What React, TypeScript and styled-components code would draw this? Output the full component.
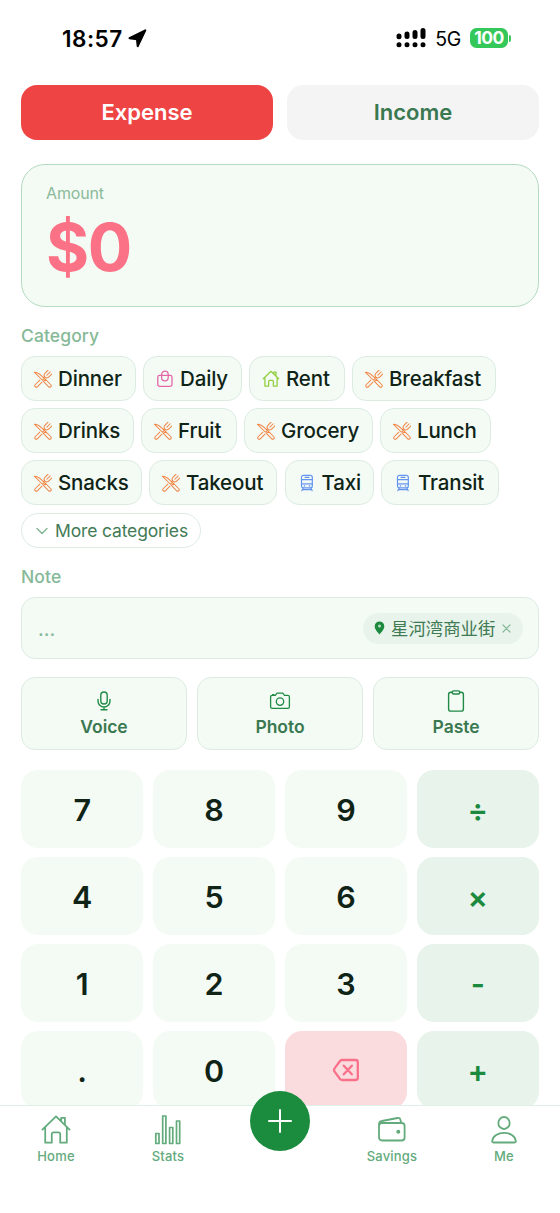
import React from 'react';
import styled, { createGlobalStyle } from 'styled-components';

const GlobalStyle = createGlobalStyle`
  * { box-sizing: border-box; }
  body { margin: 0; background: #fff; overflow: hidden; }
  button { border: 0; margin: 0; padding: 0; background: none; font: inherit; color: inherit; }
`;

const ui = 'Inter, "Noto Sans CJK SC", sans-serif';

const Screen = styled.div`
  width: 560px;
  height: 1213px;
  display: flex;
  flex-direction: column;
  background: #fff;
  font-family: ${ui};
  overflow: hidden;
`;

const StatusBar = styled.header`
  flex: none;
  height: 84px;
  padding: 0 49px 8px 62px;
  display: flex;
  align-items: center;
  color: #000;
`;

const Clock = styled.span`
  font-size: 22.5px;
  font-weight: 600;
  letter-spacing: 0.5px;
  margin-right: 5px;
`;

const StatusRight = styled.div`
  margin-left: auto;
  display: flex;
  align-items: center;
`;

const Network = styled.span`
  font-size: 19.5px;
  letter-spacing: -0.3px;
  margin: 1px 9px 0 9px;
`;

const Battery = styled.span`
  width: 38px;
  height: 20px;
  border-radius: 6.5px;
  background: #34c759;
  color: #fff;
  font-size: 17.5px;
  font-weight: 700;
  letter-spacing: -0.6px;
  line-height: 20px;
  text-align: center;
`;

const BatteryTip = styled.span`
  width: 2px;
  height: 7px;
  margin-left: 1px;
  border-radius: 0 3px 3px 0;
  background: #34c759;
`;

const Body = styled.main`
  flex: 1;
  min-height: 0;
  padding: 0 21px;
  overflow: hidden;
  display: flex;
  flex-direction: column;
`;

const Segments = styled.div`
  flex: none;
  display: grid;
  grid-template-columns: 1fr 1fr;
  gap: 14px;
  padding-top: 0.5px;
`;

const Segment = styled.button<{ $active?: boolean }>`
  height: 55.5px;
  border-radius: 16px;
  font-size: 22px;
  font-weight: 600;
  background: ${p => (p.$active ? '#ef4444' : '#f4f4f4')};
  color: ${p => (p.$active ? '#fff' : '#3a7850')};
`;

const AmountCard = styled.section`
  flex: none;
  height: 143px;
  margin-top: 23.6px;
  padding: 18px 24px;
  border: 1.5px solid #b5dbc1;
  border-radius: 24px;
  background: #f4fbf5;
`;

const AmountLabel = styled.div`
  font-size: 16px;
  line-height: 20px;
  letter-spacing: -0.15px;
  color: #8bba9a;
`;

const AmountValue = styled.div`
  margin-top: 8.5px;
  font-size: 66px;
  line-height: 72px;
  font-weight: 700;
  letter-spacing: -1.4px;
  color: #fb7185;
`;

const SectionLabel = styled.h2<{ $top: number; $bottom: number }>`
  flex: none;
  margin: ${p => p.$top}px 0 ${p => p.$bottom}px;
  font-size: 17.5px;
  line-height: 20px;
  font-weight: 500;
  letter-spacing: 0.1px;
  color: #86b997;
`;

const Chips = styled.div`
  flex: none;
  display: flex;
  flex-direction: column;
  gap: 7.5px;
`;

const ChipRow = styled.div`
  display: flex;
  gap: 7.5px;
`;

const Chip = styled.button<{ $w: number }>`
  width: ${p => p.$w}px;
  height: 44.5px;
  padding-left: 12px;
  border: 1px solid #dcece1;
  border-radius: 14px;
  background: #f4fbf5;
  display: flex;
  align-items: center;
  gap: 6px;
  font-size: 20.5px;
  font-weight: 500;
  letter-spacing: -0.15px;
  color: #0f2417;
  white-space: nowrap;
`;

const MoreChip = styled.button`
  width: 180px;
  height: 35px;
  margin-top: 1px;
  padding-left: 14px;
  border: 1px solid #dcece1;
  border-radius: 18px;
  display: flex;
  align-items: center;
  gap: 7px;
  font-size: 17.5px;
  letter-spacing: -0.15px;
  color: #437b56;
  white-space: nowrap;
`;

const NoteBox = styled.section`
  flex: none;
  height: 62px;
  padding: 0 15px 0 16px;
  border: 1px solid #dcece1;
  border-radius: 14px;
  background: #f4fbf5;
  display: flex;
  align-items: center;
  justify-content: space-between;
`;

const Placeholder = styled.span`
  font-size: 19px;
  font-weight: 500;
  margin-top: 2px;
  color: #8bba9a;
`;

const PlaceTag = styled.span`
  width: 160px;
  height: 31px;
  padding: 0 11px;
  border-radius: 16px;
  background: #e8f4eb;
  display: flex;
  align-items: center;
  font-family: "Noto Sans CJK SC", sans-serif;
  font-size: 17.4px;
  color: #3f7a53;
  white-space: nowrap;
`;

const PlaceName = styled.span`
  margin: 0 7px 1px 6px;
`;

const Actions = styled.div`
  flex: none;
  margin-top: 18px;
  display: grid;
  grid-template-columns: repeat(3, 1fr);
  gap: 10px;
`;

const Action = styled.button`
  height: 73px;
  padding-top: 12px;
  border: 1px solid #dcece1;
  border-radius: 14px;
  background: #f4fbf5;
  display: flex;
  flex-direction: column;
  align-items: center;
  gap: 4px;
  font-size: 17.5px;
  line-height: 22px;
  font-weight: 600;
  letter-spacing: -0.05px;
  color: #3a7850;
`;

const Keypad = styled.div`
  flex: none;
  margin-top: 20px;
  display: grid;
  grid-template-columns: repeat(4, 1fr);
  gap: 9px 9.5px;
`;

type KeyKind = 'digit' | 'operator' | 'delete';
const keyFill = { digit: '#f4fbf5', operator: '#e8f3eb', delete: '#fbdcde' };
const keyInk = { digit: '#0f2417', operator: '#1b8a3f', delete: '#f9708a' };

const Key = styled.button<{ $kind: KeyKind }>`
  height: 78px;
  border-radius: 17px;
  background: ${p => keyFill[p.$kind]};
  color: ${p => keyInk[p.$kind]};
  display: flex;
  align-items: center;
  justify-content: center;
  font-size: 30.5px;
  font-weight: 600;
`;

const TabBar = styled.nav`
  position: relative;
  flex: none;
  height: 108px;
  border-top: 1px solid #dff0e8;
  background: #fff;
  display: grid;
  grid-template-columns: repeat(5, 1fr);
`;

const Tab = styled.button`
  height: 62px;
  padding-top: 9px;
  display: flex;
  flex-direction: column;
  align-items: center;
  gap: 3px;
  font-size: 13px;
  line-height: 16px;
  font-weight: 500;
  letter-spacing: 0.2px;
  color: #63ab7c;
`;

const AddButton = styled.button`
  position: absolute;
  left: 250px;
  top: -15px;
  width: 60px;
  height: 60px;
  border-radius: 50%;
  background: #1b8c3e;
  display: flex;
  align-items: center;
  justify-content: center;
`;

type SvgProps = React.SVGProps<SVGSVGElement> & { w: number; h?: number; vb: string };
const Drawing = styled.svg`
  flex: none;
`;
const Svg = ({ w, h = w, vb, children, ...rest }: SvgProps) => (
  <Drawing width={w} height={h} viewBox={vb} fill="none" strokeLinecap="round" strokeLinejoin="round" {...rest}>
    {children}
  </Drawing>
);

const FoodIcon = () => (
  <Svg w={18} vb="0 0 36 36" stroke="#f08545" strokeWidth={2}>
    <g transform="rotate(-45 18 18)">
      <path d="M15.500-3.500C20.500 0 21 9 20.500 19H15.500Z" />
      <path d="M15 22V36.500Q15 40 18 40T21 36.500V22Z" />
    </g>
    <g transform="rotate(45 18 18)">
      <path d="M12.500-2.500V6Q12.500 12.500 18 12.500T23.500 6V-2.500M18-2.500V7M15 24V36.500Q15 40 18 40T21 36.500V24M16.500 12.500V15M19.500 12.500V15" />
    </g>
  </Svg>
);

const BagIcon = () => (
  <Svg w={18} vb="0 0 18 18" stroke="#e566a8" strokeWidth={1.3}>
    <rect x="1.800" y="5.400" width="14.200" height="11" rx="1.800" />
    <path d="M5.600 5.200V4.500A3.300 3.300 0 0 1 12.200 4.500V5.200M5.600 5.400V7.500A3.300 3.300 0 0 0 12.200 7.500V5.400" />
  </Svg>
);

const HouseShape = () => (
  <path d="M1.500 15.500 16 1.500 30.500 15.500M4.500 13V29.500H11.500V20.500Q11.500 18.500 13.500 18.500H18.500Q20.500 18.500 20.500 20.500V29.500H27.500V13M21.500 6.500V3H25.500V10.500" />
);

const TrainIcon = () => (
  <Svg w={18} vb="0 0 18 18" stroke="#6494ee" strokeWidth={1.2}>
    <rect x="3.500" y="1.300" width="10.800" height="12.600" rx="2" />
    <path d="M7 3.400H11M3.700 5.700H14.300M3.700 9.800H14.300M5.300 14 3.800 16.700M12.700 14 14.200 16.700M4.800 15.600H13.200M6.200 11.900H6.800M11.200 11.900H11.800" />
  </Svg>
);

const RentIcon = () => (
  <Svg w={18} vb="-1 -1 34 34" stroke="#93cf43" strokeWidth={2.5}><HouseShape /></Svg>
);

const chipIcons = { food: FoodIcon, bag: BagIcon, home: RentIcon, train: TrainIcon };
type ChipData = [string, keyof typeof chipIcons, number];
const categories: ChipData[][] = [
  [['Dinner', 'food', 114.500], ['Daily', 'bag', 98.5], ['Rent', 'home', 95.5], ['Breakfast', 'food', 143.500]],
  [['Drinks', 'food', 112.500], ['Fruit', 'food', 95.500], ['Grocery', 'food', 128.5], ['Lunch', 'food', 111]],
  [['Snacks', 'food', 120.500], ['Takeout', 'food', 128], ['Taxi', 'train', 89], ['Transit', 'train', 117.5]],
];

const MicIcon = () => (
  <Svg w={22} vb="0 0 22 22" stroke="#1f8b45" strokeWidth={1.4}>
    <rect x="7.800" y="2" width="6.400" height="12" rx="3.200" />
    <path d="M5 9.500V11A6 6 0 0 0 17 11V9.500M11 17V19.500M8 19.700H14" />
  </Svg>
);

const CameraIcon = () => (
  <Svg w={22} vb="0 0 22 22" stroke="#1f8b45" strokeWidth={1.3}>
    <path d="M3.200 5.300H6.300L8 3.200H13.800L15.500 5.300H18.800Q20.400 5.300 20.400 6.900V16.700Q20.400 18.300 18.800 18.300H3.200Q1.600 18.300 1.600 16.700V6.900Q1.600 5.300 3.200 5.300ZM3.500 4.600H5" />
    <circle cx="11" cy="11.600" r="3.700" />
  </Svg>
);

const ClipboardIcon = () => (
  <Svg w={22} vb="0 0 22 22" stroke="#1f8b45" strokeWidth={1.4}>
    <path d="M7.200 2.200H5.800Q3.600 2.200 3.600 4.400V18.900Q3.600 21.100 5.800 21.100H16.200Q18.400 21.100 18.400 18.900V4.400Q18.400 2.200 16.200 2.200H14.800" />
    <rect x="7.200" y="0.900" width="7.600" height="3.100" rx="1.500" />
  </Svg>
);

const keys: [string, KeyKind][] = [
  ['7', 'digit'], ['8', 'digit'], ['9', 'digit'], ['÷', 'operator'],
  ['4', 'digit'], ['5', 'digit'], ['6', 'digit'], ['×', 'operator'],
  ['1', 'digit'], ['2', 'digit'], ['3', 'digit'], ['-', 'operator'],
  ['.', 'digit'], ['0', 'digit'], ['del', 'delete'], ['+', 'operator'],
];

const DeleteIcon = () => (
  <Svg w={28} h={24} vb="0 0 28 24" stroke="currentColor" strokeWidth={2.3}>
    <path d="M10.200 2H23.500Q25.800 2 25.800 4.300V19.700Q25.800 22 23.500 22H10.200Q9 22 8.200 21.200L2.600 13.600Q1.400 12 2.600 10.400L8.200 2.800Q9 2 10.200 2ZM11.800 7.700 19.800 16.300M19.800 7.700 11.800 16.300" />
  </Svg>
);

export default function App() {
  return (
    <Screen>
      <GlobalStyle />
      <StatusBar>
        <Clock>18:57</Clock>
        <Svg w={19} vb="0 0 19 19"><path d="M17.300 1.300 9.700 17.200 8.900 10.200 1.500 9.200Z" fill="#000" stroke="#000" strokeWidth={2} /></Svg>
        <StatusRight>
          <Svg w={30} h={20} vb="0 0 30 20" stroke="#000" strokeWidth={5}>
            <path d="M3 8V8.700M11 6V8.500M19 4.500V8.500M27 2.500V8.500M3 16.800V16.810M11 16.800V16.810M19 16.800V16.810M27 16.800V16.810" />
          </Svg>
          <Network>5G</Network>
          <Battery>100</Battery>
          <BatteryTip />
        </StatusRight>
      </StatusBar>

      <Body>
        <Segments>
          <Segment $active>Expense</Segment>
          <Segment>Income</Segment>
        </Segments>

        <AmountCard>
          <AmountLabel>Amount</AmountLabel>
          <AmountValue>$0</AmountValue>
        </AmountCard>

        <SectionLabel $top={19.4} $bottom={10.5}>Category</SectionLabel>
        <Chips>
          {categories.map((row, i) => (
            <ChipRow key={i}>
              {row.map(([name, icon, width]) => {
                const Icon = chipIcons[icon];
                return <Chip key={name} $w={width}><Icon />{name}</Chip>;
              })}
            </ChipRow>
          ))}
          <MoreChip>
            <Svg w={12} h={8} vb="0 0 12 8" stroke="#7fb591" strokeWidth={1.4}><path d="M1 1.500 6 6.500 11 1.500" /></Svg>
            More categories
          </MoreChip>
        </Chips>

        <SectionLabel $top={19} $bottom={10}>Note</SectionLabel>
        <NoteBox>
          <Placeholder>...</Placeholder>
          <PlaceTag>
            <Svg w={11} h={14} vb="0 0 11 14">
              <path d="M5.500 0.500A4.800 4.800 0 0 1 10.300 5.200C10.300 8.500 7 11.500 5.500 13.500C4 11.500 0.700 8.500 0.700 5.200A4.800 4.800 0 0 1 5.500 0.500Z" fill="#1b8a3f" />
              <circle cx="5.500" cy="5" r="1.500" fill="#b8dcc3" />
            </Svg>
            <PlaceName>星河湾商业街</PlaceName>
            <Svg w={9} vb="0 0 9 9" stroke="#86b997" strokeWidth={1.2}><path d="M1 1 8 8M8 1 1 8" /></Svg>
          </PlaceTag>
        </NoteBox>

        <Actions>
          <Action><MicIcon />Voice</Action>
          <Action><CameraIcon />Photo</Action>
          <Action><ClipboardIcon />Paste</Action>
        </Actions>

        <Keypad>
          {keys.map(([label, kind]) => (
            <Key key={label} $kind={kind}>{kind === 'delete' ? <DeleteIcon /> : label}</Key>
          ))}
        </Keypad>
      </Body>

      <TabBar>
        <Tab>
          <Svg w={30} vb="0 0 32 32" stroke="currentColor" strokeWidth={1.900}><HouseShape /></Svg>
          Home
        </Tab>
        <Tab>
          <Svg w={30} vb="0 0 30 30" stroke="currentColor" strokeWidth={1.7}>
            <path d="M2.800 18.500H6V28.500H2.800ZM9.700 1H12.900V28.500H9.700ZM16.600 12.500H19.800V28.500H16.600ZM23.500 6H26.700V28.500H23.500Z" />
          </Svg>
          Stats
        </Tab>
        <span />
        <Tab>
          <Svg w={30} vb="0 0 30 30" stroke="currentColor" strokeWidth={1.8}>
            <rect x="2" y="8" width="25.600" height="17.500" rx="3" />
            <path d="M2.200 9.500Q1.800 6.500 5 6L20.500 3Q23 2.600 23.500 5L24.200 8" />
            <circle cx="21.300" cy="16.800" r="1.100" fill="currentColor" />
          </Svg>
          Savings
        </Tab>
        <Tab>
          <Svg w={30} vb="0 0 30 30" stroke="currentColor" strokeWidth={1.800}>
            <ellipse cx="15" cy="8" rx="5.700" ry="6" />
            <path d="M4.500 27.500Q3 27.500 3.200 25.800C4 21 9 17.800 15 17.800S26 21 26.800 25.800Q27 27.500 25.500 27.500Z" />
          </Svg>
          Me
        </Tab>
        <AddButton>
          <Svg w={24} vb="0 0 24 24" stroke="#fff" strokeWidth={2}><path d="M12 1V23M1 12H23" /></Svg>
        </AddButton>
      </TabBar>
    </Screen>
  );
}
